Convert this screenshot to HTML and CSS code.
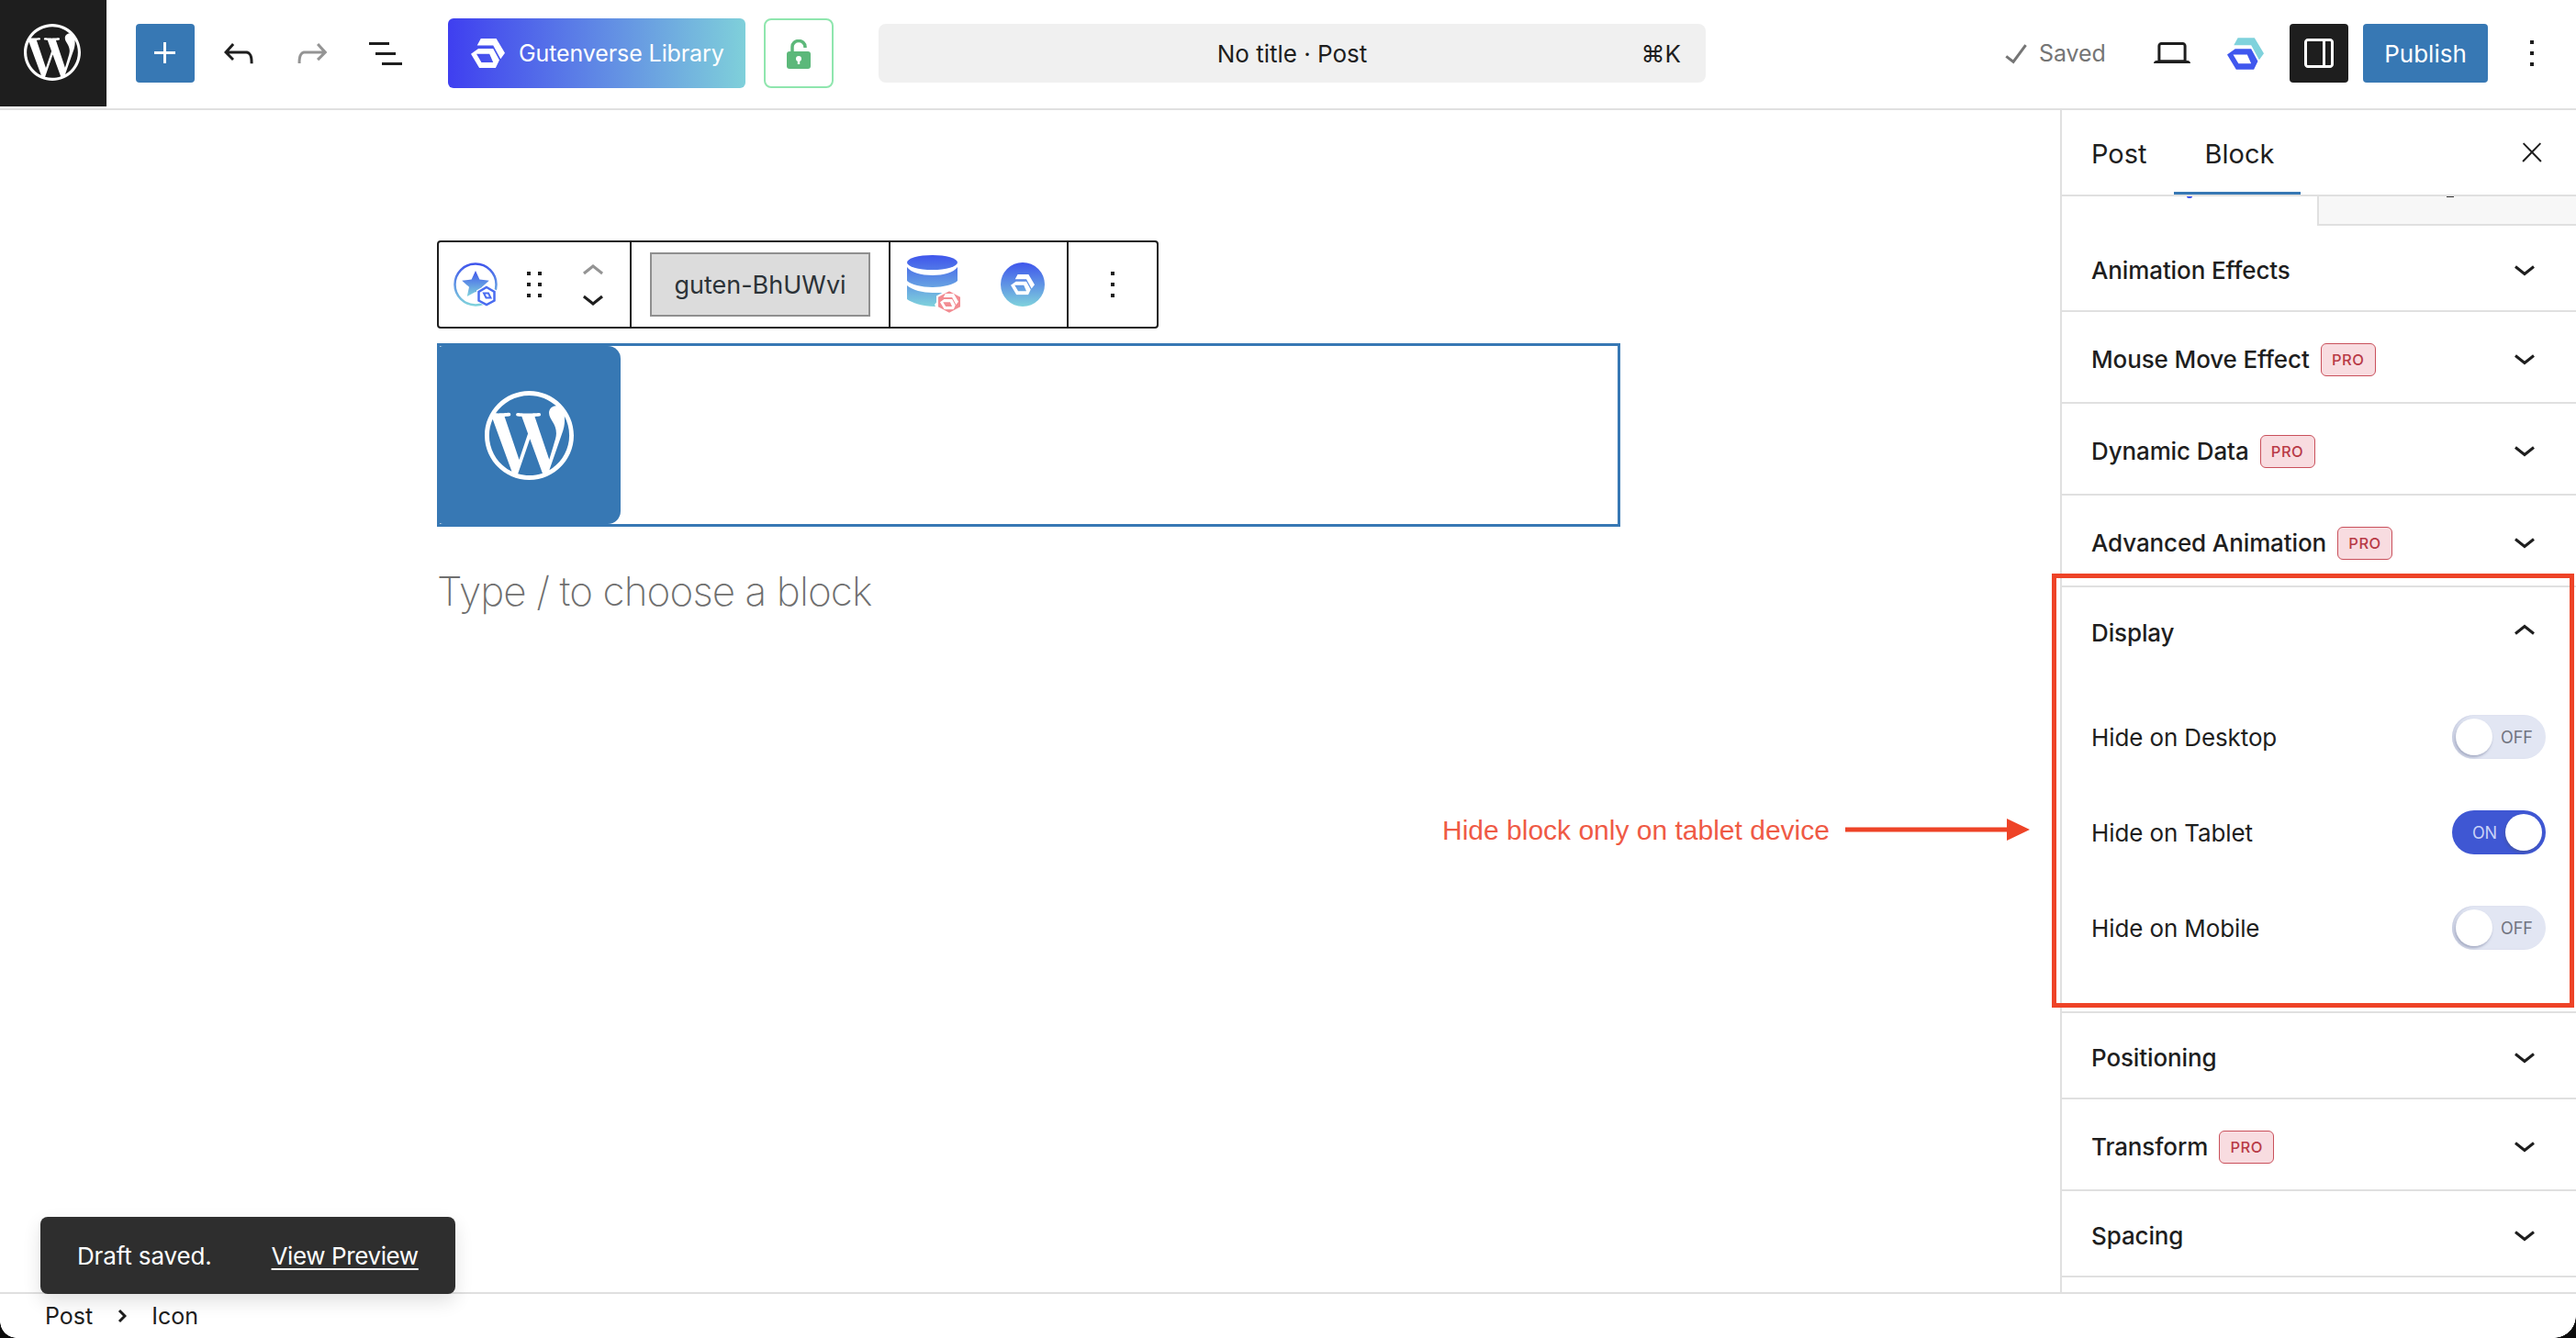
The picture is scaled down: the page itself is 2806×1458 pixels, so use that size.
FILE: index.html
```html
<!DOCTYPE html>
<html lang="en">
<head>
<meta charset="utf-8">
<title>No title · Post</title>
<link rel="stylesheet" href="styles.css">
</head>
<body>
<svg class="defs" aria-hidden="true">
  <defs>
    <linearGradient id="gv-grad" x1="0" y1="0" x2="0" y2="1">
      <stop offset="0" stop-color="#3f55ec"/>
      <stop offset="1" stop-color="#7fd2dc"/>
    </linearGradient>
    <linearGradient id="db-grad" gradientUnits="userSpaceOnUse" x1="0" y1="0" x2="0" y2="56">
      <stop offset="0" stop-color="#3f55ec"/>
      <stop offset="1" stop-color="#7fd2dc"/>
    </linearGradient>
    <symbol id="gv" viewBox="0 0 110 95">
      <path fill="var(--band, currentColor)" d="M32 0H82L110 47L96 66L72 22H20Z"/>
      <path fill="var(--ring, currentColor)" fill-rule="evenodd" d="M0 50L24 33H72L92 70L80 95H27ZM18 50L34 77H72L60 50Z"/>
    </symbol>
    <symbol id="wp" viewBox="0 0 24 24">
      <path fill="currentColor" d="M21.469 6.825c.84 1.537 1.318 3.3 1.318 5.175 0 3.979-2.156 7.456-5.363 9.325l3.295-9.527c.615-1.54.82-2.771.82-3.864 0-.405-.026-.78-.07-1.11m-7.981.105c.647-.03 1.232-.105 1.232-.105.582-.075.514-.93-.067-.899 0 0-1.755.135-2.88.135-1.064 0-2.85-.15-2.85-.15-.585-.03-.661.855-.075.885 0 0 .54.061 1.125.09l1.68 4.605-2.37 7.08L5.354 6.9c.649-.03 1.234-.1 1.234-.1.585-.075.516-.93-.065-.896 0 0-1.746.138-2.874.138-.2 0-.438-.008-.69-.015C4.911 3.15 8.235 1.215 12 1.215c2.809 0 5.365 1.072 7.286 2.833-.046-.003-.091-.009-.141-.009-1.06 0-1.812.923-1.812 1.914 0 .89.513 1.643 1.06 2.531.411.72.89 1.643.89 2.977 0 .915-.354 1.994-.821 3.479l-1.075 3.585-3.9-11.61.001.014zM12 22.784c-1.059 0-2.081-.153-3.048-.437l3.237-9.406 3.315 9.087c.024.053.05.101.078.149-1.12.393-2.325.609-3.582.609M1.211 12c0-1.564.336-3.05.935-4.39L7.29 21.709C3.694 19.96 1.212 16.271 1.21 12M12 0C5.385 0 0 5.385 0 12s5.385 12 12 12 12-5.385 12-12S18.615 0 12 0"/>
    </symbol>
    <symbol id="chev" viewBox="0 0 22 12">
      <path fill="none" stroke="currentColor" stroke-width="3" d="M1 1.5L11 9.5L21 1.5"/>
    </symbol>
    <symbol id="more" viewBox="0 0 24 24">
      <path fill="currentColor" d="M13 19h-2v-2h2v2zm0-6h-2v-2h2v2zm0-6h-2V5h2v2z"/>
    </symbol>
  </defs>
</svg>

<div class="app">
  <header class="topbar">
    <a class="wp-tile"><svg class="wp-top"><use href="#wp"/></svg></a>
    <button class="btn-add"><svg class="ico" viewBox="0 0 24 24"><path d="M11 12.5V17.5H12.5V12.5H17.5V11H12.5V6H11V11H6V12.5H11Z"/></svg></button>
    <svg class="ico undo" viewBox="0 0 24 24"><path d="M18.3 11.7c-.6-.6-1.4-.9-2.3-.9H6.7l2.9-3.3-1.1-1-4.5 5L8.5 16l1-1-2.7-2.7H16c.5 0 .9.2 1.3.5 1 1 1 3.4 1 4.5v.3h1.5v-.2c0-1.5 0-4.3-1.5-5.7z"/></svg>
    <svg class="ico redo" viewBox="0 0 24 24"><path d="M15.6 6.5l-1.1 1 2.9 3.3H8c-.9 0-1.7.3-2.3.9-1.4 1.5-1.4 4.2-1.4 5.6v.2h1.5v-.3c0-1.1 0-3.5 1-4.5.3-.3.7-.5 1.3-.5h9.2L14.5 15l1.1 1.1 4.6-4.6-4.6-5z"/></svg>
    <svg class="ico listview" viewBox="0 0 24 24"><path d="M3 6h11v1.5H3V6Zm3.5 5.5h11V13h-11v-1.5ZM21 17H10v1.5h11V17Z"/></svg>
    <button class="btn-library"><svg class="lib-logo"><use href="#gv"/></svg><span>Gutenverse Library</span></button>
    <button class="btn-lock">
      <svg class="lock-ico" viewBox="0 0 26 32"><path fill="none" stroke="#5cb87a" stroke-width="3.5" d="M6 14V8a7 6.5 0 0 1 14 0v1"/><rect y="13" width="26" height="19" rx="3" fill="#5cb87a"/><circle cx="13" cy="21" r="3" fill="#fff"/><rect x="11.8" y="21" width="2.4" height="6" fill="#fff"/></svg>
    </button>
    <div class="doc-bar"><span class="doc-title">No title · Post</span><span class="doc-key">⌘K</span></div>
    <div class="top-right">
      <svg class="ico saved-ico" viewBox="0 0 24 24"><path d="M16.7 7.1l-6.3 8.5-3.3-2.5-.9 1.2 4.5 3.4L17.9 8z"/></svg>
      <span class="saved">Saved</span>
      <svg class="ico laptop" viewBox="0 0 24 24"><path d="M20.5 16h-.7V8c0-1.1-.9-2-2-2H6.2c-1.1 0-2 .9-2 2v8h-.7c-.8 0-1.5.7-1.5 1.5h20c0-.8-.7-1.5-1.5-1.5zM5.7 8c0-.3.2-.5.5-.5h11.6c.3 0 .5.2.5.5v7.6H5.7V8z"/></svg>
      <svg class="gv-top"><use href="#gv"/></svg>
      <button class="btn-side"><svg class="ico" viewBox="0 0 24 24"><path d="M18 4H6c-1.1 0-2 .9-2 2v12c0 1.1.9 2 2 2h12c1.1 0 2-.9 2-2V6c0-1.1-.9-2-2-2zm-4 14.5H6c-.3 0-.5-.2-.5-.5V6c0-.3.2-.5.5-.5h8v13zm4.5-.5c0 .3-.2.5-.5.5h-2.5v-13H18c.3 0 .5.2.5.5v12z"/></svg></button>
      <button class="btn-publish">Publish</button>
      <svg class="ico top-more"><use href="#more"/></svg>
    </div>
  </header>

  <div class="main">
    <main class="canvas">
      <div class="block-toolbar">
        <div class="tb-group tb-first">
          <svg class="tb-star" viewBox="0 0 49 48">
            <circle cx="24" cy="24" r="22.5" fill="none" stroke="url(#gv-grad)" stroke-width="2.5"/>
            <path fill="url(#gv-grad)" d="M24 9l4.4 9.6 10.4 1.2-7.8 7 2.2 10.2L24 32l-9.2 5 2.2-10.2-7.8-7 10.400-1.2z"/>
            <path fill="#fff" d="M36 24l11 6.500v12L36 48l-11-5.500v-12z"/>
            <path fill="none" stroke="#4a6cf0" stroke-width="2.500" d="M36 27l8.500 5v9.500L36 46l-8.500-4.500V32z"/>
            <path fill="none" stroke="#4a6cf0" stroke-width="2" d="M33 33.500h5l2.500 5h-5z"/>
          </svg>
          <svg class="ico tb-drag" viewBox="0 0 24 24"><path d="M8 7h2V5H8v2zm0 6h2v-2H8v2zm0 6h2v-2H8v2zm6-14v2h2V5h-2zm0 8h2v-2h-2v2zm0 6h2v-2h-2v2z"/></svg>
          <div class="tb-mover">
            <svg class="ico mover-up" viewBox="0 0 24 24"><path d="M6.500 12.400L12 8l5.500 4.400-.9 1.200L12 10l-4.500 3.600-1-1.200z"/></svg>
            <svg class="ico mover-down" viewBox="0 0 24 24"><path d="M17.500 11.600L12 16l-5.500-4.400.9-1.200L12 14l4.500-3.600 1 1.200z"/></svg>
          </div>
        </div>
        <div class="tb-group tb-class"><div class="class-field">guten-BhUWvi</div></div>
        <div class="tb-group tb-plugin">
          <svg class="tb-db" viewBox="0 0 60 64">
            <ellipse cx="27.500" cy="8" rx="27.500" ry="8" fill="url(#db-grad)"/>
            <path fill="url(#db-grad)" d="M0 13C4 19 16 22 27.500 22S51 19 55 13V28C51 32 39 35 27.500 35S4 32 0 28Z"/>
            <path fill="url(#db-grad)" d="M0 33C5 38 18 41 27.500 41L40 41L30 54L31 56C18 56 5 52 0 48Z"/>
            <path fill="#f28c92" stroke="#fff" stroke-width="2" d="M46 38L59 45V57L46 64L33 57V45Z"/>
            <svg x="36" y="42" width="20" height="17.500" class="white-logo"><use href="#gv"/></svg>
          </svg>
          <svg class="tb-circle" viewBox="0 0 48 48">
            <circle cx="24" cy="24" r="24" fill="url(#gv-grad)"/>
            <svg x="11" y="13" width="26" height="22.500" class="white-logo"><use href="#gv"/></svg>
          </svg>
        </div>
        <div class="tb-group tb-last"><svg class="ico"><use href="#more"/></svg></div>
      </div>

      <div class="block-selected">
        <div class="icon-box"><svg class="wp-block"><use href="#wp"/></svg></div>
      </div>
      <p class="placeholder">Type / to choose a block</p>
    </main>

    <aside class="sidebar">
      <div class="tabs">
        <span class="tab">Post</span>
        <span class="tab tab-active">Block</span>
        <svg class="ico tab-close" viewBox="0 0 24 24"><path d="M13 11.800l6.100-6.300-1-1-6.100 6.200-6.100-6.200-1 1 6.100 6.300-6.500 6.700 1 1 6.500-6.600 6.500 6.600 1-1z"/></svg>
      </div>
      <div class="remnant">
        <span class="rem-dot"></span>
        <div class="rem-box"><span class="rem-mark"></span></div>
      </div>

      <div class="row"><span class="row-title">Animation Effects</span><svg class="chev"><use href="#chev"/></svg></div>
      <div class="row row-pro"><span class="row-title">Mouse Move Effect</span><span class="pro">PRO</span><svg class="chev"><use href="#chev"/></svg></div>
      <div class="row row-pro"><span class="row-title">Dynamic Data</span><span class="pro">PRO</span><svg class="chev"><use href="#chev"/></svg></div>
      <div class="row row-pro"><span class="row-title">Advanced Animation</span><span class="pro">PRO</span><svg class="chev"><use href="#chev"/></svg></div>

      <section class="panel-open">
        <div class="row row-head"><span class="row-title">Display</span><svg class="chev chev-up"><use href="#chev"/></svg></div>
        <div class="panel-body">
          <div class="opt"><span>Hide on Desktop</span><div class="toggle"><i class="knob"></i><b>OFF</b></div></div>
          <div class="opt"><span>Hide on Tablet</span><div class="toggle toggle-on"><b>ON</b><i class="knob"></i></div></div>
          <div class="opt"><span>Hide on Mobile</span><div class="toggle"><i class="knob"></i><b>OFF</b></div></div>
        </div>
      </section>

      <div class="row"><span class="row-title">Positioning</span><svg class="chev"><use href="#chev"/></svg></div>
      <div class="row row-pro"><span class="row-title">Transform</span><span class="pro">PRO</span><svg class="chev"><use href="#chev"/></svg></div>
      <div class="row"><span class="row-title">Spacing</span><svg class="chev"><use href="#chev"/></svg></div>
    </aside>
  </div>

  <footer class="crumbs">
    <span>Post</span>
    <svg class="crumb-chev" viewBox="0 0 10 16"><path fill="none" stroke="currentColor" stroke-width="3" d="M2 2L8 8L2 14"/></svg>
    <span>Icon</span>
  </footer>

  <div class="toast"><span class="toast-msg">Draft saved.</span><a class="toast-link">View Preview</a></div>

  <div class="note-box"></div>
  <span class="note-text">Hide block only on tablet device</span>
  <svg class="note-arrow" viewBox="0 0 201 24"><path fill="#ee4327" d="M0 9.500H176V0L201 12L176 24V14.500H0Z"/></svg>

  <i class="corner corner-l"></i>
  <i class="corner corner-r"></i>
</div>
</body>
</html>
```

FILE: styles.css
```css
* { box-sizing: border-box; }
html, body { margin: 0; padding: 0; }
body { font-family: Inter, "Liberation Sans", sans-serif; color: #1e1e1e; background: #fff; }
button { font: inherit; border: 0; padding: 0; margin: 0; }
.defs { position: absolute; width: 0; height: 0; }
.ico { width: 48px; height: 48px; fill: currentColor; flex: none; display: block; }
.app { position: relative; width: 2806px; height: 1458px; overflow: hidden; display: flex; flex-direction: column; }

/* top bar */
.topbar { height: 120px; flex: none; display: flex; align-items: center; border-bottom: 2px solid #e0e0e0; padding-bottom: 2px; }
.wp-tile { width: 116px; height: 118px; margin-top: -2px; padding-right: 3px; background: #1e1e1e; color: #fff; display: flex; align-items: center; justify-content: center; }
.wp-top { width: 62px; height: 62px; }
.btn-add { width: 64px; height: 64px; margin-left: 32px; background: #3778b4; color: #fff; border-radius: 4px; display: flex; align-items: center; justify-content: center; }
.undo { margin-left: 24px; }
.redo { margin-left: 32px; color: #949494; }
.listview { margin-left: 32px; }
.btn-library { width: 324px; height: 76px; margin-left: 44px; border-radius: 6px; background: linear-gradient(90deg, #3f3ff0 0%, #7fd0da 100%); color: #fff; display: flex; align-items: center; font-size: 25px; letter-spacing: -.1px; padding-left: 25px; --band: #fff; --ring: #fff; }
.lib-logo { width: 37px; height: 32px; margin-right: 15px; flex: none; }
.btn-lock { width: 76px; height: 76px; margin-left: 20px; background: #fff; border: 2px solid #8fe6ae; border-radius: 8px; display: flex; align-items: center; justify-content: center; }
.lock-ico { width: 26px; height: 32px; margin-top: 2px; }
.doc-bar { width: 901px; height: 64px; margin-left: 49px; background: #f0f0f0; border-radius: 8px; display: flex; align-items: center; justify-content: center; position: relative; font-size: 26px; }
.doc-key { position: absolute; right: 27px; }
.top-right { margin-left: auto; display: flex; align-items: center; padding-right: 24px; }
.saved-ico { color: #757575; margin-right: 1px; }
.saved { font-size: 25px; letter-spacing: -.1px; color: #757575; width: 72px; }
.laptop { margin-left: 49px; }
.gv-top { width: 40px; height: 35px; margin-left: 36px; --band: #7fd2dc; --ring: #3f57ee; }
.btn-side { width: 64px; height: 64px; margin-left: 28px; background: #1e1e1e; color: #fff; border-radius: 4px; display: flex; align-items: center; justify-content: center; }
.btn-publish { width: 136px; height: 64px; margin-left: 16px; background: #3778b4; color: #fff; border-radius: 4px; font-size: 26px; }
.top-more { margin-left: 24px; }

/* main */
.main { flex: 1; min-height: 0; display: flex; }
.canvas { flex: 1; padding: 142px 0 0 476px; min-width: 0; }

.block-toolbar { width: 786px; height: 96px; border: 2px solid #1e1e1e; border-radius: 4px; display: flex; background: #fff; }
.tb-group { height: 100%; display: flex; align-items: center; flex: none; }
.tb-first { width: 210px; padding-left: 16px; border-right: 2px solid #1e1e1e; }
.tb-star { width: 49px; height: 48px; flex: none; }
.tb-drag { margin-left: 15px; }
.tb-mover { margin-left: 16px; display: flex; flex-direction: column; width: 48px; height: 77px; }
.mover-up { color: #949494; }
.mover-down { margin-top: -19px; }
.tb-class { width: 282px; padding-left: 20px; border-right: 2px solid #1e1e1e; }
.class-field { width: 240px; height: 70px; background: #dcdcdc; border: 2px solid #8f8f8f; font-size: 27px; color: #2c3338; display: flex; align-items: center; justify-content: center; }
.tb-plugin { width: 194px; padding-left: 18px; border-right: 2px solid #1e1e1e; }
.tb-db { width: 60px; height: 64px; flex: none; }
.tb-circle { width: 48px; height: 48px; margin-left: 42px; flex: none; }
.white-logo { --band: #fff; --ring: #fff; }
.tb-last { flex: 1; justify-content: center; }

.block-selected { width: 1289px; height: 200px; margin-top: 16px; border: 3px solid #3778b4; }
.icon-box { width: 200px; height: 194px; margin-left: -3px; background: #3778b4; border-radius: 6px 14px 14px 6px; color: #fff; display: flex; align-items: center; justify-content: center; }
.wp-block { width: 97px; height: 97px; }
.placeholder { margin: 40px 0 0; font-size: 44px; line-height: 60px; font-weight: 200; letter-spacing: -.9px; color: #6f6f6f; }

/* sidebar */
.sidebar { width: 562px; flex: none; border-left: 2px solid #e0e0e0; overflow: hidden; }
.tabs { height: 94px; border-bottom: 2px solid #e0e0e0; display: flex; align-items: center; position: relative; font-size: 29px; padding: 2px 0 0 32px; }
.tab { margin-right: 63px; }
.tab-active { position: relative; }
.tab-active::after { content: ""; position: absolute; left: -34px; right: -29px; top: 59px; height: 3px; background: #3778b4; }
.tab-close { position: absolute; right: 31px; top: 29px; width: 34px; height: 34px; }
.remnant { height: 32px; display: flex; justify-content: flex-end; position: relative; }
.rem-dot { position: absolute; left: 136px; top: 0; width: 6px; height: 2px; background: #3f57ee; border-radius: 0 0 3px 3px; }
.rem-box { width: 282px; height: 32px; background: #f7f7f7; border-left: 2px solid #e0e0e0; border-bottom: 2px solid #e0e0e0; position: relative; }
.rem-mark { position: absolute; left: 139px; top: 0; width: 8px; height: 1px; background: #333; }

.row { min-height: 94px; padding: 6px 45px 0 32px; border-bottom: 2px solid #e0e0e0; display: flex; align-items: center; font-size: 26px; font-weight: 500; letter-spacing: -.12px; }
.row-pro { min-height: 100px; }
.row-title { line-height: 36px; }
.pro { width: 60px; height: 36px; margin-left: 12px; background: #f8dce0; border: 1.5px solid #c9505b; border-radius: 6px; color: #b83a46; font-size: 16.5px; font-weight: 500; display: flex; align-items: center; justify-content: center; letter-spacing: .5px; }
.chev { width: 22px; height: 12px; margin-left: auto; flex: none; }
.chev-up { transform: rotate(180deg); margin-top: -8px; }
.panel-open { border-bottom: 2px solid #e0e0e0; }
.row-head { border-bottom: 0; }
.panel-body { padding: 17px 33px 39px 32px; }
.opt { height: 104px; display: flex; align-items: center; justify-content: space-between; font-size: 26px; letter-spacing: -.12px; }
.toggle { width: 102px; height: 48px; padding: 4px; border-radius: 24px; background: #e2e6f3; display: flex; align-items: center; box-shadow: inset 3px 0 3px -1px #c8cde0; }
.knob { width: 40px; height: 40px; border-radius: 50%; background: #fff; flex: none; box-shadow: -1px 2px 3px rgba(70, 80, 120, .4); }
.toggle b { font-weight: 400; font-size: 18px; color: #70737f; margin-left: 9px; }
.toggle-on { background: #3f57d3; justify-content: flex-end; box-shadow: none; }
.toggle-on b { color: #c9d2f7; margin: 0 9px 0 0; }

/* footer */
.crumbs { height: 50px; flex: none; border-top: 2px solid #e0e0e0; display: flex; align-items: center; padding-left: 49px; font-size: 25px; }
.crumb-chev { width: 10px; height: 16px; margin: 0 27px 0 27px; }

/* overlays */
.toast { position: absolute; left: 44px; top: 1326px; width: 452px; height: 84px; background: #2e2e2e; border-radius: 8px; color: #fff; font-size: 26px; display: flex; align-items: center; padding-left: 40px; box-shadow: 0 8px 20px rgba(0, 0, 0, .12); }
.toast-msg { letter-spacing: -.15px; }
.toast-link { margin-left: 65px; letter-spacing: -.4px; text-decoration: underline; text-underline-offset: 4px; }
.note-box { position: absolute; left: 2235px; top: 625px; width: 569px; height: 473px; border: 5px solid #ee4327; }
.note-text { position: absolute; left: 1571px; top: 885px; font-family: "Liberation Sans", sans-serif; font-size: 30px; line-height: 40px; color: #ef5a45; white-space: nowrap; }
.note-arrow { position: absolute; left: 2010px; top: 892px; width: 201px; height: 24px; }
.corner { position: absolute; bottom: 0; display: block; }
.corner-l { left: 0; width: 18px; height: 18px; background: radial-gradient(circle at 100% 0, transparent 17.500px, #0b0b0b 18px); }
.corner-r { right: 0; width: 24px; height: 24px; background: radial-gradient(circle at 0 0, transparent 23.500px, #0b0b0b 24px); }
```
